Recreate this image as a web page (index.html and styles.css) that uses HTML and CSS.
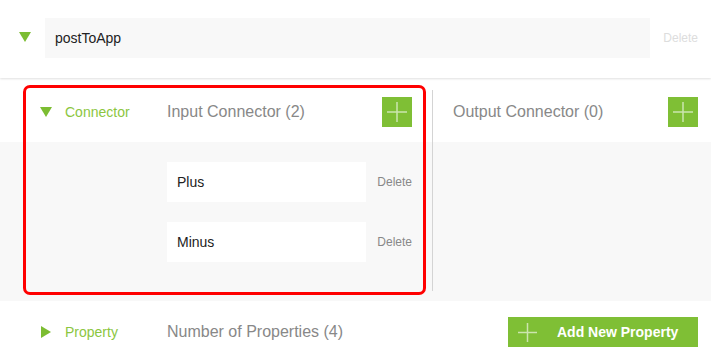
FILE: index.html
```html
<!DOCTYPE html>
<html lang="en">
<head>
    <meta charset="UTF-8">
    <meta name="viewport" content="width=device-width, initial-scale=1.0">
    <title>postToApp</title>
    <link rel="stylesheet" href="styles.css">
</head>
<body>

    <!-- Cabeçalho do fluxo -->
    <div class="flow-head">
        <span class="caret caret-down caret-top"></span>
        <div class="name-box">postToApp</div>
        <span class="delete-link delete-muted">Delete</span>
    </div>

    <!-- Conectores -->
    <div class="connector">
        <div class="conn-row conn-header">
            <div class="label-cell">
                <span class="caret caret-down"></span>
                <span class="label">Connector</span>
            </div>
            <div class="col col-input">
                <div class="col-head">
                    <span class="col-title">Input Connector (2)</span>
                    <button class="add-btn">
                        <svg width="20" height="20" viewBox="0 0 20 20"><path d="M10 0V20M0 10H20" stroke="rgba(255,255,255,0.6)" stroke-width="1.5"/></svg>
                    </button>
                </div>
            </div>
            <div class="col col-output">
                <div class="col-head">
                    <span class="col-title">Output Connector (0)</span>
                    <button class="add-btn">
                        <svg width="20" height="20" viewBox="0 0 20 20"><path d="M10 0V20M0 10H20" stroke="rgba(255,255,255,0.6)" stroke-width="1.5"/></svg>
                    </button>
                </div>
            </div>
        </div>

        <div class="conn-row conn-body">
            <div class="label-cell"></div>
            <div class="col col-input item-list">
                <div class="item">
                    <div class="item-box">Plus</div>
                    <span class="delete-link">Delete</span>
                </div>
                <div class="item">
                    <div class="item-box">Minus</div>
                    <span class="delete-link">Delete</span>
                </div>
            </div>
            <div class="col col-output"></div>
        </div>

        <!-- Destaque em vermelho -->
        <div class="highlight"></div>
    </div>

    <!-- Propriedades -->
    <div class="property-row">
        <div class="label-cell label-cell-prop">
            <span class="caret caret-right"></span>
            <span class="label">Property</span>
        </div>
        <span class="col-title prop-title">Number of Properties (4)</span>
        <button class="add-property">
            <svg width="19" height="19" viewBox="0 0 19 19"><path d="M9.5 0V19M0 9.5H19" stroke="rgba(255,255,255,0.6)" stroke-width="1.5"/></svg>
            <span>Add New Property</span>
        </button>
    </div>

</body>
</html>
```

FILE: styles.css
```css
html, body {
    margin: 0;
    padding: 0;
    overflow: hidden;
}

body {
    font-family: "Liberation Sans", Arial, sans-serif;
    background-color: #fff;
    width: 711px;
}

/* Setas */
.caret {
    display: inline-block;
    width: 0;
    height: 0;
    flex-shrink: 0;
}

.caret-down {
    border-left: 6px solid transparent;
    border-right: 6px solid transparent;
    border-top: 10px solid #7cbd32;
}

.caret-right {
    border-top: 6px solid transparent;
    border-bottom: 6px solid transparent;
    border-left: 10px solid #7cbd32;
}

/* Cabeçalho */
.flow-head {
    position: relative;
    z-index: 1;
    display: flex;
    align-items: flex-start;
    gap: 13px;
    height: 78px;
    box-sizing: border-box;
    padding: 18px 13px 0 19px;
    background-color: #fff;
    box-shadow: 0 1px 2px rgba(0, 0, 0, 0.12);
}

.caret-top {
    margin-top: 14px;
    margin-right: 1px;
}

.name-box {
    flex: 1;
    height: 40px;
    line-height: 40px;
    padding-left: 10px;
    background-color: #f8f8f8;
    font-size: 14px;
    color: #222;
}

.delete-link {
    font-size: 12px;
    color: #888;
    line-height: 40px;
}

.delete-muted {
    color: #ddd;
}

/* Conectores */
.connector {
    position: relative;
}

.conn-row {
    display: flex;
}

.conn-header {
    padding-top: 12px;
}

.conn-body {
    background-color: #f8f8f8;
    padding-bottom: 10px;
}

.label-cell {
    width: 167px;
    box-sizing: border-box;
    padding-left: 40px;
    display: flex;
    align-items: center;
    gap: 13px;
    flex-shrink: 0;
}

.conn-header .label-cell {
    padding-top: 7px;
    padding-bottom: 15px;
}

.label {
    font-size: 14px;
    color: #8cc63f;
}

.col {
    width: 245px;
    flex-shrink: 0;
}

.col-input {
    padding-right: 20px;
}

.col-output {
    border-left: 1px solid #d4d4d4;
    padding-left: 20px;
}

.conn-header .col {
    padding-top: 7px;
    padding-bottom: 15px;
}

.col-head {
    display: flex;
    align-items: center;
    justify-content: space-between;
    height: 30px;
}

.col-title {
    font-size: 16px;
    color: #888;
}

.add-btn {
    width: 30px;
    height: 30px;
    padding: 0;
    border: none;
    background-color: #7fbf35;
    display: flex;
    align-items: center;
    justify-content: center;
    cursor: pointer;
}

.add-btn svg {
    display: block;
}

/* Itens */
.item-list {
    display: flex;
    flex-direction: column;
    gap: 20px;
    padding-top: 20px;
    padding-bottom: 29px;
}

.item {
    display: flex;
    align-items: center;
    gap: 11px;
}

.item-box {
    width: 200px;
    height: 40px;
    line-height: 40px;
    box-sizing: border-box;
    padding-left: 10px;
    background-color: #fff;
    font-size: 14px;
    color: #222;
}

.highlight {
    position: absolute;
    left: 23px;
    top: 7px;
    width: 403px;
    height: 210px;
    box-sizing: border-box;
    border: 3px solid #f00;
    border-radius: 7px;
    pointer-events: none;
}

/* Propriedades */
.property-row {
    display: flex;
    align-items: center;
    padding: 16px 13px 0 0;
    height: 30px;
}

.label-cell-prop {
    padding-left: 41px;
    gap: 14px;
    height: 30px;
}

.prop-title {
    flex: 1;
}

.add-property {
    width: 190px;
    height: 30px;
    border: none;
    padding: 0 0 0 10px;
    background-color: #7fbf35;
    display: flex;
    align-items: center;
    gap: 20px;
    font-family: "Liberation Sans", Arial, sans-serif;
    font-size: 14px;
    font-weight: bold;
    color: #fff;
    cursor: pointer;
}

.add-property svg {
    display: block;
}
```
